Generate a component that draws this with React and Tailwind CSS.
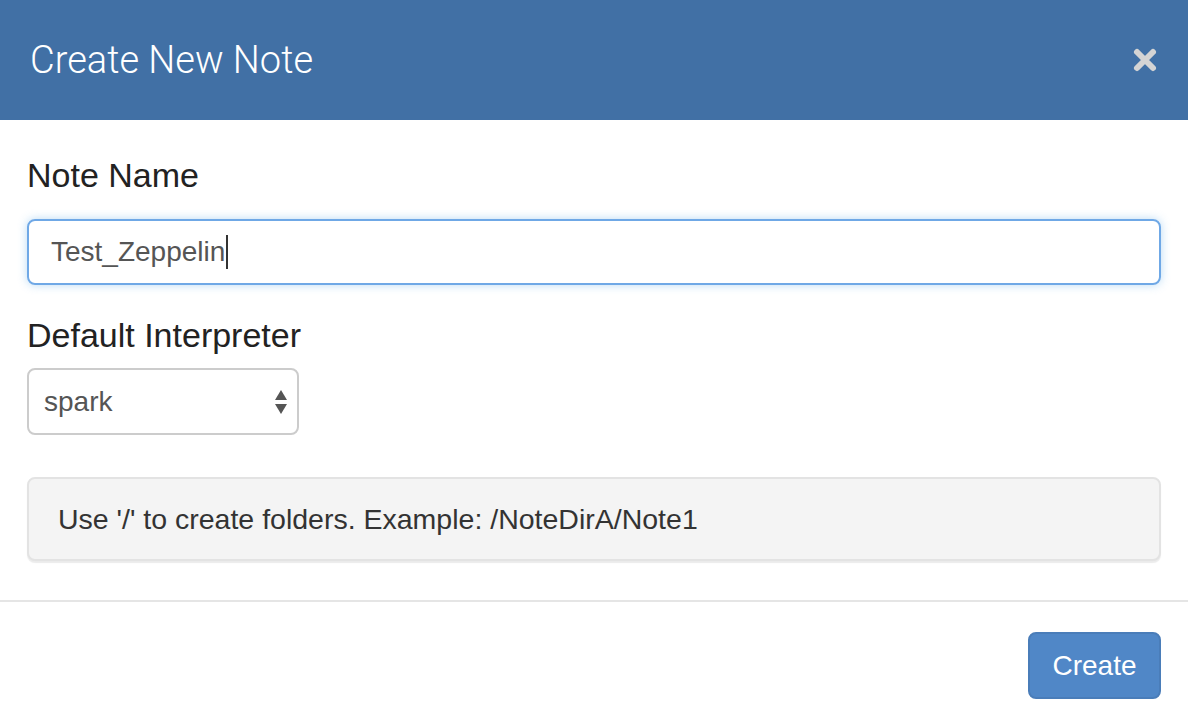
import React from 'react';

const CloseIcon = () => (
  <svg width="26" height="26" viewBox="0 0 26 26">
    <path d="M5 5 L21 21 M21 5 L5 21" stroke="#d4d4d4" strokeWidth="6" strokeLinecap="round" />
  </svg>
);

export default function App() {
  return (
    <div className="w-[1188px] h-[726px] bg-white flex flex-col" style={{ fontFamily: '"Liberation Sans", Arial, sans-serif' }}>
      {/* header */}
      <div className="h-[120px] shrink-0 bg-[#4170a5] flex items-center justify-between pl-[30px] pr-[30px]">
        <h1 className="text-white text-[38px] font-light" style={{ fontFamily: 'Roboto, "Liberation Sans", sans-serif' }}>
          Create New Note
        </h1>
        <CloseIcon />
      </div>

      {/* body */}
      <div className="px-[27px] pt-[35px] flex flex-col">
        <label className="text-[34px] leading-[40px] text-[#222]">Note Name</label>
        <div className="mt-[24px] h-[66px] border-2 border-[#6fa8e6] rounded-[8px] shadow-[0_0_10px_rgba(102,175,233,0.45)] flex items-center pl-[22px]">
          <span className="text-[28px] text-[#555]">Test_Zeppelin</span>
          <span className="w-[2px] h-[34px] bg-[#333] ml-[1px]" />
        </div>

        <label className="mt-[30px] text-[34px] leading-[40px] text-[#222]">Default Interpreter</label>
        <div className="mt-[13px] w-[272px] h-[67px] border-2 border-[#ccc] rounded-[8px] flex items-center justify-between pl-[15px] pr-[9px]">
          <span className="text-[28px] text-[#555]">spark</span>
          <svg width="14" height="26" viewBox="0 0 14 26">
            <path d="M7 1 L13 11 L1 11 Z" fill="#555" />
            <path d="M1 15 L13 15 L7 25 Z" fill="#555" />
          </svg>
        </div>

        <div className="mt-[42px] h-[84px] bg-[#f4f4f4] border-2 border-[#e3e3e3] rounded-[8px] shadow-[0_2px_1px_rgba(0,0,0,0.08)] flex items-center pl-[29px]">
          <span className="text-[28.5px] text-[#333]">Use '/' to create folders. Example: /NoteDirA/Note1</span>
        </div>
      </div>

      {/* footer */}
      <div className="mt-[39px] border-t-2 border-[#e5e5e5] flex justify-end px-[27px] pt-[30px]">
        <button className="w-[133px] h-[67px] bg-[#5087c7] border-2 border-[#4a7db9] rounded-[8px] text-white text-[28px]">
          Create
        </button>
      </div>
    </div>
  );
}
